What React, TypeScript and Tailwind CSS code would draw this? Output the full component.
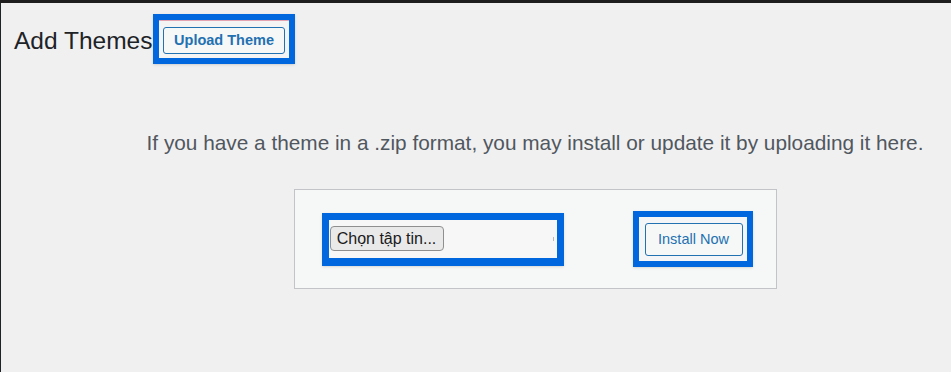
import React from 'react';

const HIGHLIGHT = 'border-[#0067df]';

export default function App() {
  return (
    <div className="w-[951px] h-[372px] overflow-hidden bg-[#f0f0f1] font-['Liberation_Sans',Arial,sans-serif]">
      <div className="h-[3px] bg-[#1e1e1e]" />
      <div className="h-[369px] border-l border-[#1d2327]">
        {/* title row */}
        <div className="flex items-start pt-[11px] pl-[13px]">
          <h1 className="mt-[15px] w-[139px] whitespace-nowrap text-[24.5px] leading-[24px] font-normal text-[#1d2327]">Add Themes</h1>
          <div className={`border-[6px] ${HIGHLIGHT} shadow-sm`}>
            <div className="border-t border-[#e4a3b0] bg-[#f4f4f5] pt-[6px] pb-[4px] px-[4px]">
              <button className="flex h-[27px] w-[122px] items-center justify-center rounded-[3px] border border-[#2271b1] bg-[#f6f7f7] text-[14.5px] font-bold text-[#2271b1]">
                Upload Theme
              </button>
            </div>
          </div>
        </div>

        {/* upload area */}
        <div className="ml-[118px] w-[832px] pt-[67px] flex flex-col items-center">
          <p className="whitespace-nowrap text-[20.8px] leading-[24px] text-[#50575e]">
            If you have a theme in a .zip format, you may install or update it by uploading it here.
          </p>
          <div className="mt-[34px] flex h-[100px] w-[483px] items-center border border-[#c3c4c7] bg-[#f6f7f7] pl-[27px]">
            <div className={`border-[7px] border-b-[8px] ${HIGHLIGHT} shadow-sm`}>
              <div className="flex h-[38px] w-[228px] items-center justify-between bg-[#f7f7f7] pl-[1px] pr-[3px]">
                <span className="flex h-[25px] w-[114px] items-center justify-center whitespace-nowrap rounded-[4px] border border-[#8f8f8f] bg-[#e9e9ea] text-[16px] text-[#1a1a1a]">
                  Chọn tập tin...
                </span>
                <span className="h-[4px] w-[1px] bg-[#b8b8b8]" />
              </div>
            </div>
            <div className={`ml-[69px] border-[6px] ${HIGHLIGHT} shadow-sm`}>
              <div className="bg-[#f4f5f6] pt-[6px] pb-[5px] pl-[6px] pr-[4px]">
                <button className="flex h-[33px] w-[98px] items-center justify-center whitespace-nowrap rounded-[3px] border border-[#2271b1] bg-[#f6f7f7] text-[14.5px] text-[#2271b1]">
                  Install Now
                </button>
              </div>
            </div>
          </div>
        </div>
      </div>
    </div>
  );
}
